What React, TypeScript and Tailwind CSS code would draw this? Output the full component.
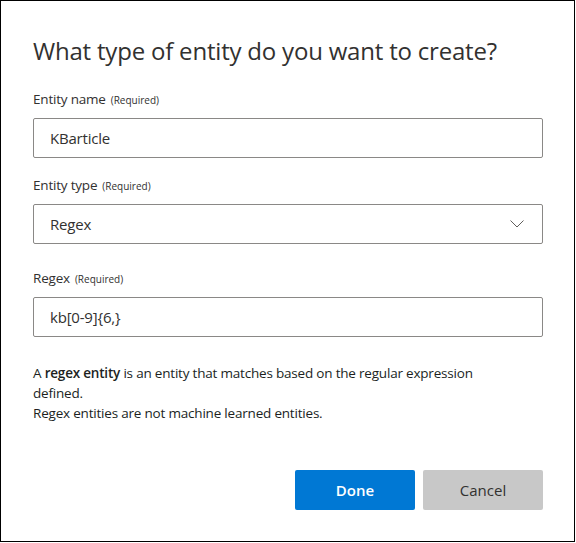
import React from "react";

function Label({ text }: { text: string }) {
  return (
    <div className="flex items-baseline gap-[5px] text-[13.5px] leading-[20px] tracking-[-0.2px] text-[#323130]">
      <span>{text}</span>
      <span className="text-[10px] tracking-normal">(Required)</span>
    </div>
  );
}

function Field({ value, chevron }: { value: string; chevron?: boolean }) {
  return (
    <div className="mt-[8px] flex h-[40px] items-center justify-between rounded-[2px] border border-[#8a8886] pl-[16px] pr-[18px] text-[15px] tracking-[-0.2px] text-[#323130]">
      <span>{value}</span>
      {chevron && (
        <svg width="14" height="8" viewBox="0 0 14 8" fill="none">
          <path d="M0.5 0.5 L7 7 L13.5 0.5" stroke="#605e5c" strokeWidth="1" />
        </svg>
      )}
    </div>
  );
}

export default function App() {
  return (
    <div
      className="h-[542px] w-[575px] border border-black bg-white"
      style={{ fontFamily: '"Open Sans", "Noto Sans", sans-serif' }}
    >
      <div className="pl-[32px] pr-[31px] pt-[34px]">
        <h1 className="text-[24px] leading-[32px] tracking-[-0.2px] text-[#323130]">
          What type of entity do you want to create?
        </h1>

        <div className="mt-[22px]">
          <Label text="Entity name" />
          <Field value="KBarticle" />
        </div>

        <div className="mt-[17px]">
          <Label text="Entity type" />
          <Field value="Regex" chevron />
        </div>

        <div className="mt-[24px]">
          <Label text="Regex" />
          <Field value="kb[0-9]{6,}" />
        </div>

        <p className="mt-[26px] max-w-[480px] text-[13.5px] leading-[20px] tracking-[-0.2px] text-[#201f1e]">
          A <b className="font-semibold">regex entity</b> is an entity that matches based on the regular expression
          defined.
          <br />
          Regex entities are not machine learned entities.
        </p>

        <div className="mt-[47px] flex justify-end gap-[8px]">
          <button className="h-[40px] w-[120px] rounded-[2px] bg-[#0078d4] text-[15px] font-semibold text-white">
            Done
          </button>
          <button className="h-[40px] w-[120px] rounded-[2px] bg-[#c8c8c8] text-[15px] text-[#323130]">
            Cancel
          </button>
        </div>
      </div>
    </div>
  );
}
